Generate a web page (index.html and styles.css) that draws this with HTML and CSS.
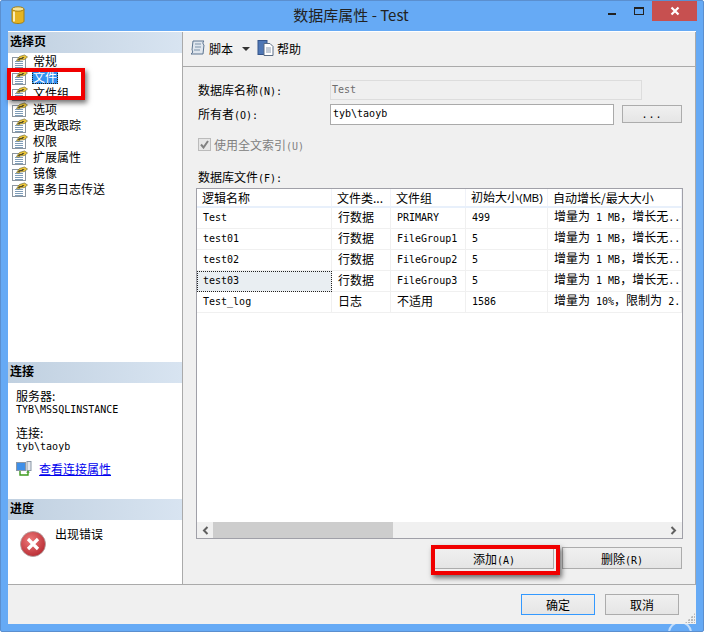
FILE: index.html
```html
<!DOCTYPE html>
<html lang="zh-CN">
<head>
  <meta charset="UTF-8">
  <title>数据库属性 - Test</title>
  <link rel="stylesheet" href="styles.css">
</head>
<body>
  <svg class="defs" width="0" height="0">
    <symbol id="page-icon" viewBox="0 0 16 16">
      <rect x="0.5" y="4.5" width="13" height="11" fill="#fff" stroke="#8c96a0"/>
      <path d="M3 8.500h8M3 10.500h8M3 12.500h8M3 14.500h8" stroke="#7f9db8"/>
      <path d="M4.500 7.500l3-4 5-1.500 3 2-3 2.500-4 .5-2 1z" fill="#f0c838" stroke="#77703c" stroke-width="0.700"/>
      <path d="M5.500 7l2-2 2 0-2 2zM8.500 6l2-2 2 0-2 2z" fill="#4f4a2a"/>
    </symbol>
  </svg>

  <div class="window">
    <div class="watermark"></div>
    <div class="titlebar">
      <svg class="app-icon" width="14" height="18" viewBox="0 0 14 18">
        <path d="M1 3v12c0 1.500 2.500 2.500 6 2.500s6-1 6-2.500V3z" fill="#e6b422" stroke="#a57f10"/>
        <ellipse cx="7" cy="3" rx="6" ry="2.200" fill="#f7e59a" stroke="#a57f10"/>
        <path d="M3 5.500v10" stroke="#fbeeb8" stroke-width="2"/>
      </svg>
      <div class="title">数据库属性 - Test</div>
      <div class="win-btn min-btn"><span></span></div>
      <div class="win-btn max-btn"><span></span></div>
      <div class="close-btn">
        <svg width="10" height="10" viewBox="0 0 10 10"><path d="M1.500 1.500l7 7M8.500 1.500l-7 7" stroke="#fff" stroke-width="2.200"/></svg>
      </div>
    </div>

    <div class="client">
      <div class="panes">
        <div class="sidebar">
          <div class="side-head">选择页</div>
          <ul class="page-list">
            <li><svg class="pg"><use href="#page-icon"/></svg><span>常规</span></li>
            <li class="selected"><svg class="pg"><use href="#page-icon"/></svg><span>文件</span></li>
            <li><svg class="pg"><use href="#page-icon"/></svg><span>文件组</span></li>
            <li><svg class="pg"><use href="#page-icon"/></svg><span>选项</span></li>
            <li><svg class="pg"><use href="#page-icon"/></svg><span>更改跟踪</span></li>
            <li><svg class="pg"><use href="#page-icon"/></svg><span>权限</span></li>
            <li><svg class="pg"><use href="#page-icon"/></svg><span>扩展属性</span></li>
            <li><svg class="pg"><use href="#page-icon"/></svg><span>镜像</span></li>
            <li><svg class="pg"><use href="#page-icon"/></svg><span>事务日志传送</span></li>
          </ul>

          <div class="side-head">连接</div>
          <div class="conn">
            <div class="conn-label">服务器:</div>
            <div class="lat conn-val">TYB\MSSQLINSTANCE</div>
            <div class="conn-label conn-gap">连接:</div>
            <div class="lat conn-val">tyb\taoyb</div>
            <div class="conn-link">
              <svg width="16" height="16" viewBox="0 0 16 16">
                <rect x="0.500" y="1.500" width="9" height="8" fill="#3f8fe8" stroke="#8a97a6"/>
                <rect x="11" y="0.500" width="4" height="9" fill="#e4e8ee" stroke="#8a97a6"/>
                <path d="M4 10v4h8v-3" fill="none" stroke="#3d9a1e" stroke-width="1.400"/>
                <path d="M10 11.500l2-2 2 2z" fill="#3d9a1e"/>
              </svg>
              <a href="#">查看连接属性</a>
            </div>
          </div>

          <div class="side-head">进度</div>
          <div class="progress">
            <svg width="26" height="26" viewBox="0 0 26 26">
              <defs>
                <radialGradient id="err" cx="0.4" cy="0.35" r="0.75">
                  <stop offset="0" stop-color="#ee7a7a"/>
                  <stop offset="1" stop-color="#b3242c"/>
                </radialGradient>
              </defs>
              <circle cx="13" cy="13" r="12.500" fill="url(#err)" stroke="#a9a0a0" stroke-width="0.800"/>
              <path d="M8 8l10 10M18 8L8 18" stroke="#fff" stroke-width="3.200"/>
            </svg>
            <span>出现错误</span>
          </div>
        </div>

        <div class="main">
          <div class="toolbar">
            <svg width="18" height="18" viewBox="0 0 18 18">
              <path d="M4 2h11c-1.500 1-1.500 3 0 4l-1 9H2c2-1 2-3 1-4z" fill="#dfe6ee" stroke="#5d7590"/>
              <path d="M6 5h6M6 8h6M5 11h6" stroke="#7d93aa"/>
            </svg>
            <span class="tool-text">脚本</span>
            <span class="caret"></span>
            <svg class="help-icon" width="17" height="18" viewBox="0 0 17 18">
              <rect x="1" y="1.500" width="9" height="14" fill="#4f77b5" stroke="#34548a"/>
              <path d="M7 4.500h6l3 3v9H7z" fill="#fff" stroke="#5a6c85"/>
              <path d="M9 9h5M9 11h5M9 13h5" stroke="#8a9ab0"/>
            </svg>
            <span class="tool-text">帮助</span>
          </div>

          <div class="form">
            <div class="form-row">
              <label class="form-label">数据库名称<span class="lat">(N):</span></label>
              <div class="field field-off lat">Test</div>
            </div>
            <div class="form-row form-row-owner">
              <label class="form-label">所有者<span class="lat">(O):</span></label>
              <div class="field field-owner lat">tyb\taoyb</div>
              <button class="btn btn-dots lat">...</button>
            </div>
            <div class="check-row">
              <span class="check"><svg width="9" height="9" viewBox="0 0 9 9"><path d="M1 4.500l2.500 3L8 1" fill="none" stroke="#808080" stroke-width="2"/></svg></span>
              <span>使用全文索引<span class="lat">(U)</span></span>
            </div>
            <div class="files-label">数据库文件<span class="lat">(F):</span></div>

            <div class="grid-box">
              <table class="files">
                <thead>
                  <tr>
                    <th class="c1">逻辑名称</th>
                    <th class="c2">文件类...</th>
                    <th class="c3">文件组</th>
                    <th class="c4">初始大小<span class="hdr-lat">(MB)</span></th>
                    <th class="c5">自动增长/最大大小</th>
                  </tr>
                </thead>
                <tbody>
                  <tr>
                    <td class="lat">Test</td><td class="cjk">行数据</td><td class="lat">PRIMARY</td><td class="lat">499</td>
                    <td class="cjk">增量为<span class="lat"> 1 MB</span>，增长无<span class="lat">..</span></td>
                  </tr>
                  <tr>
                    <td class="lat">test01</td><td class="cjk">行数据</td><td class="lat">FileGroup1</td><td class="lat">5</td>
                    <td class="cjk">增量为<span class="lat"> 1 MB</span>，增长无<span class="lat">..</span></td>
                  </tr>
                  <tr>
                    <td class="lat">test02</td><td class="cjk">行数据</td><td class="lat">FileGroup2</td><td class="lat">5</td>
                    <td class="cjk">增量为<span class="lat"> 1 MB</span>，增长无<span class="lat">..</span></td>
                  </tr>
                  <tr>
                    <td class="lat focus-cell">test03</td><td class="cjk">行数据</td><td class="lat">FileGroup3</td><td class="lat">5</td>
                    <td class="cjk">增量为<span class="lat"> 1 MB</span>，增长无<span class="lat">..</span></td>
                  </tr>
                  <tr>
                    <td class="lat">Test_log</td><td class="cjk">日志</td><td class="cjk">不适用</td><td class="lat">1586</td>
                    <td class="cjk">增量为<span class="lat"> 10%</span>，限制为<span class="lat"> 2.</span></td>
                  </tr>
                </tbody>
              </table>
              <div class="hscroll">
                <svg class="arrow" width="7" height="9" viewBox="0 0 7 9"><path d="M5.500 1L2 4.500 5.500 8" fill="none" stroke="#606060" stroke-width="2"/></svg>
                <div class="track"><div class="thumb"></div></div>
                <svg class="arrow" width="7" height="9" viewBox="0 0 7 9"><path d="M1.500 1L5 4.500 1.500 8" fill="none" stroke="#606060" stroke-width="2"/></svg>
              </div>
            </div>

            <div class="grid-btns">
              <button class="btn btn-grid">添加<span class="lat">(A)</span></button>
              <button class="btn btn-grid">删除<span class="lat">(R)</span></button>
            </div>
          </div>
        </div>
      </div>

      <div class="footer">
        <button class="btn btn-foot btn-default">确定</button>
        <button class="btn btn-foot">取消</button>
      </div>
      <div class="grip"></div>
    </div>

    <!-- red annotation boxes drawn over the shot -->
    <div class="mark mark-pages"></div>
    <div class="mark mark-add"></div>
  </div>
</body>
</html>
```

FILE: styles.css
```css
html, body { margin: 0; padding: 0; }
body { font-family: "Noto Sans CJK SC", "Liberation Sans", sans-serif; font-size: 12px; color: #000; background: #fff; }
.defs { position: absolute; }
.lat { font-family: "DejaVu Sans Mono", "Noto Sans CJK SC", monospace; font-size: 10px; }

.window { position: relative; overflow: hidden; box-sizing: border-box; width: 704px; height: 632px; padding-bottom: 7px; background: #66aaf5; border: 1px solid #5b8fcf; border-radius: 2px; display: flex; flex-direction: column; }
.watermark { position: absolute; left: 667px; top: 620px; width: 20px; height: 20px; border: 2px solid rgba(255,255,255,0.6); border-radius: 50%; }

.titlebar { position: relative; height: 30px; display: flex; align-items: flex-start; }
.app-icon { margin: 5px 0 0 10px; }
.title { position: absolute; left: 0; right: 2px; top: 4px; text-align: center; font-size: 15px; line-height: 20px; color: #222; }
.win-btn { position: absolute; top: 7px; width: 10px; height: 9px; }
.min-btn { left: 607px; }
.min-btn span { display: block; margin-top: 5px; width: 8px; height: 2px; background: #222; }
.max-btn { left: 633px; top: 6px; }
.max-btn span { display: block; box-sizing: border-box; width: 10px; height: 8px; border: 1px solid #222; border-top-width: 2px; }
.close-btn { position: absolute; left: 651px; top: 0; width: 45px; height: 20px; background: #c75050; display: flex; align-items: center; justify-content: center; }

.client { position: relative; flex: 1; margin: 0 7px 0 7px; background: #f0f0f0; border-top: 1px solid #fff; display: flex; flex-direction: column; min-height: 0; }
.panes { flex: 1; display: flex; min-height: 0; border-bottom: 1px solid #aaa; }

.sidebar { box-sizing: border-box; width: 175px; background: #fff; border-right: 1px solid #aaa; display: flex; flex-direction: column; }
.side-head { height: 21px; line-height: 17px; padding-left: 2px; font-weight: bold; font-size: 12px; background: linear-gradient(to right, #c0d0e0, #d8e4f1); }
.page-list { list-style: none; margin: 0; padding: 0; flex: 1; }
.page-list li { height: 16px; line-height: 16px; display: flex; align-items: center; padding-left: 4px; }
.pg { width: 16px; height: 16px; flex: none; }
.page-list span { margin: 0 0 2px 4px; padding: 0 1px; line-height: 15px; }
.selected span { background: #3390f0; color: #fff; outline: 1px dotted #222; outline-offset: -1px; }

.conn { height: 116px; box-sizing: border-box; padding: 7px 0 0 8px; line-height: 12px; }
.conn-val { height: 12px; line-height: 12px; margin-top: 2px; }
.conn-gap { margin-top: 11px; }
.conn-link { display: flex; align-items: center; margin-top: 8px; height: 16px; }
.conn-link a { margin-left: 7px; color: #0000ee; }

.progress { height: 64px; box-sizing: border-box; padding: 5px 0 0 12px; display: flex; align-items: flex-start; }
.progress svg { margin-top: 6px; }
.progress span { margin-left: 9px; line-height: 18px; }

.main { flex: 1; display: flex; flex-direction: column; border-right: 1px solid #aaa; min-width: 0; }
.toolbar { height: 35px; box-sizing: border-box; border-bottom: 1px solid #aaa; display: flex; align-items: center; padding: 0 0 2px 6px; }
.tool-text { margin-left: 2px; }
.caret { margin: 2px 0 0 9px; border-left: 4px solid transparent; border-right: 4px solid transparent; border-top: 4px solid #333; }
.help-icon { margin-left: 7px; }
.help-icon + .tool-text { margin-left: 3px; }

.form { flex: 1; padding: 13px 13px 0 13px; display: flex; flex-direction: column; }
.form-row { display: flex; align-items: center; height: 20px; padding-left: 2px; }
.form-row-owner { margin-top: 4px; }
.form-label { width: 132px; flex: none; padding-bottom: 2px; }
.field { box-sizing: border-box; height: 20px; line-height: 18px; padding-left: 2px; border: 1px solid #aaa; background: #fff; }
.field-off { width: 312px; padding-left: 1px; border-color: #ddd; background: #f0f0f0; color: #6d6d6d; }
.field-owner { width: 284px; height: 21px; }
.btn { box-sizing: border-box; font-family: inherit; font-size: 12px; color: #000; padding: 0; border: 1px solid #acacac; background: linear-gradient(#f0f0f0, #e5e5e5); }
.btn-dots { width: 60px; height: 18px; margin-left: 8px; font-family: "DejaVu Sans Mono", monospace; font-size: 10px; letter-spacing: 1px; }
.check-row { display: flex; align-items: center; height: 14px; margin: 13px 0 0 2px; color: #808080; }
.check { box-sizing: border-box; width: 13px; height: 13px; margin-right: 3px; background: #e6e6e6; border: 1px solid #bbb; display: flex; align-items: center; justify-content: center; }
.files-label { margin: 19px 0 0 2px; height: 14px; line-height: 14px; }

.grid-box { box-sizing: border-box; height: 351px; width: 487px; margin-top: 4px; background: #fff; border: 1px solid #a0a0a8; position: relative; overflow: hidden; }
.files { border-collapse: collapse; table-layout: fixed; width: 485px; }
.files th { height: 17px; padding: 0 0 0 5px; font-weight: normal; text-align: left; line-height: 16px; background: #fff; border-right: 1px solid #f0f2f8; border-bottom: 2px solid #e8f0fb; white-space: nowrap; overflow: hidden; }
.files td { height: 20px; padding: 0 0 0 6px; line-height: 14px; border-right: 1px solid #f0f0f0; border-bottom: 1px solid #f0f0f0; white-space: nowrap; overflow: hidden; }
.files td.cjk { padding-bottom: 3px; height: 17px; }
.hdr-lat { font-family: "Liberation Sans", sans-serif; font-size: 11px; }
.c1 { width: 129px; }
.c2 { width: 53px; }
.c3 { width: 69px; }
.c4 { width: 76px; }
.files .focus-cell { background: #e9eef2; outline: 1px dotted #222; outline-offset: -1px; }
.hscroll { position: absolute; left: 0; right: 0; bottom: 0; height: 16px; background: #f0f0f0; display: flex; align-items: center; }
.arrow { flex: none; margin: 0 5px; }
.track { flex: 1; height: 100%; }
.thumb { margin-left: -1px; width: 180px; height: 100%; background: #cdcdcd; }

.grid-btns { display: flex; justify-content: flex-end; gap: 8px; margin-top: 8px; }
.btn-grid { width: 120px; height: 22px; }

.footer { height: 39px; display: flex; justify-content: flex-end; align-items: flex-start; gap: 10px; padding: 9px 17px 0 0; box-sizing: border-box; }
.btn-foot { width: 74px; height: 21px; }
.btn-default { border-color: #3399ff; }
.grip { position: absolute; right: 1px; bottom: 1px; width: 10px; height: 10px; background: radial-gradient(circle at 1px 1px, #b8b8b8 1px, transparent 1px) 0 0 / 3px 3px; clip-path: polygon(100% 0, 100% 100%, 0 100%); }

.mark { position: absolute; box-sizing: border-box; border: 4px solid #f00000; box-shadow: 2px 3px 5px rgba(0,0,0,0.55); }
.mark-pages { left: 6px; top: 67px; width: 78px; height: 32px; }
.mark-add { left: 430px; top: 544px; width: 129px; height: 30px; }
```
